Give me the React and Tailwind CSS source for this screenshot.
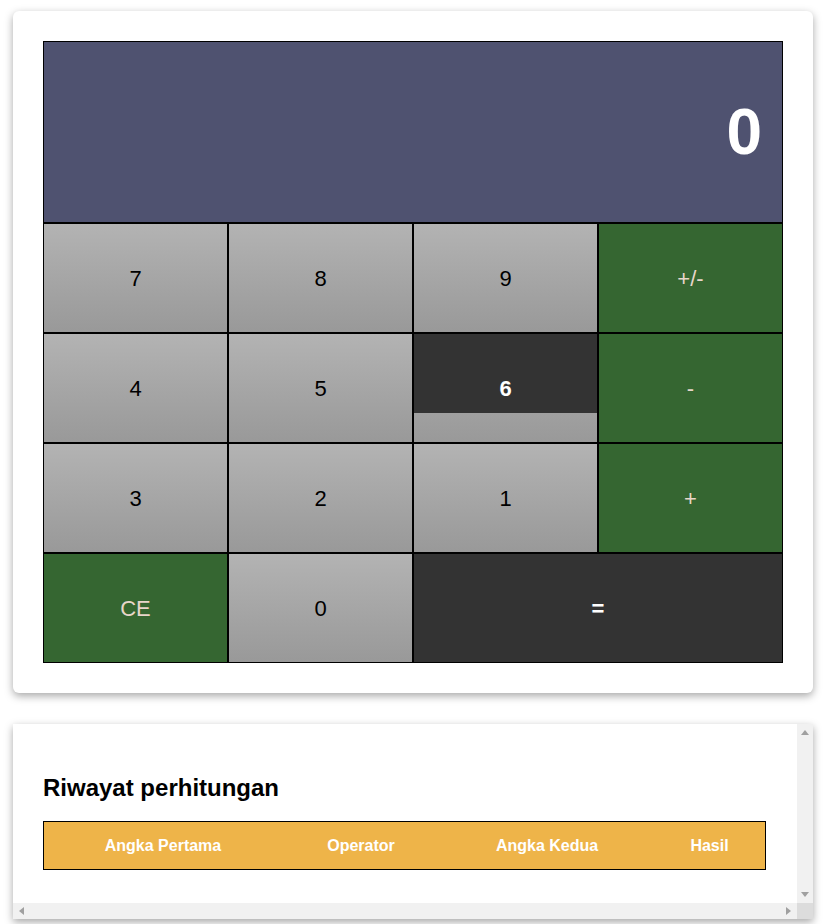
import React from "react";

const font = { fontFamily: '"Liberation Sans", Arial, sans-serif' };

const Key = ({ label, kind = "num", span = false }) => {
  const base = "h-[110px] border border-black flex items-center justify-center text-[22px]";
  const styles = {
    num: "bg-gradient-to-b from-[#b3b3b3] to-[#999999] text-black",
    op: "bg-[#356631] text-[#e8d6ca]",
    eq: "bg-[#333333] text-white font-bold",
  };
  return <div className={`${base} ${styles[kind]} ${span ? "col-span-2" : ""}`}>{label}</div>;
};

const Arrow = ({ dir }) => {
  const pts = {
    up: "0,7 4,2 8,7",
    down: "0,1 4,6 8,1",
    left: "7,0 2,4 7,8",
    right: "1,0 6,4 1,8",
  };
  return (
    <svg width="8" height="8" viewBox="0 0 8 8">
      <polygon points={pts[dir]} fill="#a0a0a0" />
    </svg>
  );
};

export default function App() {
  return (
    <div className="min-h-screen bg-white px-[13px] pt-[11px]" style={font}>
      {/* Calculator card */}
      <div className="w-[800px] rounded-md bg-white p-[30px] shadow-[0_3px_8px_rgba(0,0,0,0.35)]">
        <div className="h-[182px] border border-black bg-[#4f5270] flex items-center justify-end pr-[20px]">
          <span className="text-[64px] font-bold text-white leading-none">0</span>
        </div>
        <div className="grid grid-cols-4">
          <Key label="7" />
          <Key label="8" />
          <Key label="9" />
          <Key label="+/-" kind="op" />
          <Key label="4" />
          <Key label="5" />
          {/* hovered key */}
          <div className="relative h-[110px] border border-black bg-gradient-to-b from-[#b3b3b3] to-[#999999] flex items-center justify-center">
            <div className="absolute left-0 right-0 top-0 h-[79px] bg-[#333333]" />
            <span className="relative text-[22px] font-bold text-white">6</span>
          </div>
          <Key label="-" kind="op" />
          <Key label="3" />
          <Key label="2" />
          <Key label="1" />
          <Key label="+" kind="op" />
          <Key label="CE" kind="op" />
          <Key label="0" />
          <Key label="=" kind="eq" span />
        </div>
      </div>

      {/* History card */}
      <div className="mt-[31px] flex h-[195px] w-[800px] flex-col bg-white shadow-[0_3px_8px_rgba(0,0,0,0.35)]">
        <div className="flex flex-1">
          <div className="flex-1 px-[30px] pt-[50px]">
            <h2 className="text-[24px] font-bold text-black leading-[27px]">Riwayat perhitungan</h2>
            <div className="mt-[20px] flex h-[49px] w-[723px] items-center border border-black bg-[#eeb449] text-[16px] font-bold text-white">
              <div className="w-[238px] text-center">Angka Pertama</div>
              <div className="w-[158px] text-center">Operator</div>
              <div className="w-[214px] text-center">Angka Kedua</div>
              <div className="flex-1 text-center">Hasil</div>
            </div>
          </div>
          {/* vertical scrollbar */}
          <div className="flex w-[16px] flex-col items-center justify-between bg-[#f1f1f1] py-[4px]">
            <Arrow dir="up" />
            <Arrow dir="down" />
          </div>
        </div>
        {/* horizontal scrollbar */}
        <div className="flex h-[16px]">
          <div className="flex flex-1 items-center justify-between bg-[#f1f1f1] px-[4px]">
            <Arrow dir="left" />
            <Arrow dir="right" />
          </div>
          <div className="w-[16px] bg-[#dcdcdc]" />
        </div>
      </div>
    </div>
  );
}
